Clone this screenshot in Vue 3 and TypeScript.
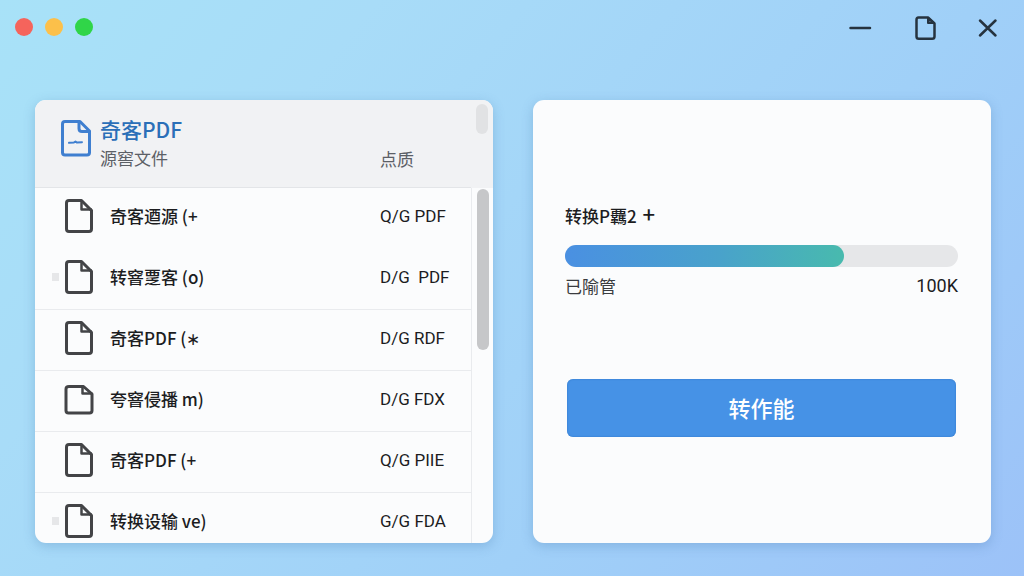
<script setup lang="ts">
interface FileRow {
  name: string
  format: string
  ruled: boolean
  marked: boolean
  compact: boolean
}

const files: FileRow[] = [
  { name: '奇客逎源 (+', format: 'Q/G PDF', ruled: false, marked: false, compact: false },
  { name: '转窨覂客 (o)', format: 'D/G  PDF', ruled: true, marked: true, compact: false },
  { name: '奇客PDF (∗', format: 'D/G RDF', ruled: true, marked: false, compact: false },
  { name: '夸窨侵播 m)', format: 'D/G FDX', ruled: true, marked: false, compact: true },
  { name: '奇客PDF (+', format: 'Q/G PIIE', ruled: true, marked: false, compact: false },
  { name: '转换设输 ve)', format: 'G/G FDA', ruled: false, marked: true, compact: false },
]

const progress = 71
</script>

<template>
  <div class="window">
    <header class="titlebar">
      <div class="lights">
        <button class="light red" type="button" aria-label="关闭"></button>
        <button class="light yellow" type="button" aria-label="最小化"></button>
        <button class="light green" type="button" aria-label="缩放"></button>
      </div>
      <div class="controls">
        <button type="button" aria-label="最小化">
          <svg width="24" height="28" viewBox="0 0 24 28"><path d="M2.5 15H22" /></svg>
        </button>
        <button type="button" aria-label="文件">
          <svg width="24" height="28" viewBox="0 0 24 28">
            <path d="M6.5 4.5H16L22.5 10.5V23.5Q22.5 25.8 20.2 25.8H6.8Q4.5 25.8 4.5 23.5V6.8Q4.5 4.5 6.5 4.5Z" />
            <path class="fold" d="M16 5V10H22Z" />
          </svg>
        </button>
        <button type="button" aria-label="关闭">
          <svg width="24" height="28" viewBox="0 0 24 28"><path d="M4 7.5L19.5 22.5M19.5 7.5L4 22.5" /></svg>
        </button>
      </div>
    </header>

    <main class="panels">
      <section class="card files">
        <table>
          <thead>
            <tr>
              <th scope="col">
                <div class="brand">
                  <svg class="brand-icon" width="32" height="40" viewBox="0 0 32 40">
                    <path d="M5 3.5H20L29.5 13V34.5Q29.5 37 27 37H5Q2.5 37 2.5 34.5V6Q2.5 3.5 5 3.5Z" />
                    <path d="M19 4V10.5Q19 13.5 22 13.5H29" />
                    <path class="dash" d="M9 24.8L14 24.4L15.5 23.6L17 24.6L22 24.2" />
                  </svg>
                  <div>
                    <h1>奇客PDF</h1>
                    <p>源窖文件</p>
                  </div>
                </div>
              </th>
              <th class="kind" scope="col">点质</th>
            </tr>
          </thead>
          <tbody>
            <tr v-for="(file, i) in files" :key="i" :class="{ ruled: file.ruled }">
              <td>
                <div class="file">
                  <span class="mark" :class="{ on: file.marked }"></span>
                  <svg v-if="file.compact" width="30" height="36" viewBox="0 0 30 36">
                    <path d="M5 5.5H19.5L28 13V29.5Q28 32 25.5 32H4.5Q2 32 2 29.5V8Q2 5.5 5 5.5Z" />
                    <path class="corner" d="M18.5 5.5V12.5H27.5" />
                  </svg>
                  <svg v-else width="30" height="36" viewBox="0 0 30 36">
                    <path d="M5 2.5H17.5L27.5 12.5V31Q27.5 33.5 25 33.5H5Q2.5 33.5 2.5 31V5Q2.5 2.5 5 2.5Z" />
                    <path class="corner" d="M17.5 3V11.5H27" />
                  </svg>
                  <span class="name">{{ file.name }}</span>
                </div>
              </td>
              <td class="format">{{ file.format }}</td>
            </tr>
          </tbody>
        </table>
        <div class="gutter" aria-hidden="true">
          <div class="gutter-head"><span class="thumb short"></span></div>
          <div class="gutter-body"><span class="thumb"></span></div>
        </div>
      </section>

      <section class="card convert">
        <h2 id="task">转换P覊2 <span class="plus">+</span></h2>
        <div class="track" role="progressbar" aria-labelledby="task" :aria-valuenow="progress">
          <div class="fill" :style="{ width: progress + '%' }"></div>
        </div>
        <div class="status"><span>已隃管</span><span class="total">100K</span></div>
        <button class="start" type="button">转作能</button>
      </section>
    </main>
  </div>
</template>

<style>
body {
  margin: 0;
}
</style>

<style scoped>
.window {
  box-sizing: border-box;
  height: 100vh;
  display: flex;
  flex-direction: column;
  overflow: hidden;
  color: #1c1d1f;
  font-family: "Noto Sans CJK SC", sans-serif;
  font-size: 17px;
  background: linear-gradient(130deg, #a8e2f8 0%, #a8dcf8 25%, #a0d0f8 65%, #9cc2f8 100%);
}

button {
  padding: 0;
  border: 0;
  background: none;
  cursor: pointer;
}

.titlebar {
  flex: none;
  height: 54px;
  padding: 0 24px 0 15px;
  display: flex;
  align-items: center;
  justify-content: space-between;
}

.lights {
  display: flex;
  gap: 12px;
}

.light {
  width: 18px;
  height: 18px;
  border-radius: 50%;
}

.red { background: #f5645c; }
.yellow { background: #fcc04a; }
.green { background: #30d548; }

.controls {
  display: flex;
  gap: 40px;
}

svg {
  display: block;
  flex: none;
  fill: none;
  stroke: #434447;
  stroke-width: 3;
  stroke-linecap: round;
  stroke-linejoin: round;
}

.controls svg {
  stroke: #26333f;
  stroke-width: 2.5;
}

.controls .fold {
  fill: #4b5f70;
  stroke-width: 2;
}

.panels {
  flex: 1;
  min-height: 0;
  padding: 46px 33px 33px 35px;
  display: grid;
  grid-template-columns: 1fr 1fr;
  grid-template-rows: minmax(0, 1fr);
  gap: 40px;
}

.card {
  overflow: hidden;
  border-radius: 11px;
  background: #fbfcfd;
  box-shadow: 0 3px 12px rgba(60, 110, 165, 0.28);
}

.files {
  display: grid;
  grid-template-columns: 1fr 22px;
  grid-template-rows: minmax(0, 1fr);
}

table {
  width: 100%;
  align-self: start;
  border-collapse: separate;
  border-spacing: 0;
  table-layout: fixed;
}

th {
  box-sizing: border-box;
  height: 88px;
  padding: 0 0 2px;
  border-bottom: 1px solid #e3e5e8;
  background: #f1f2f4;
  text-align: left;
  font-weight: 400;
}

.brand {
  display: flex;
  align-items: center;
  gap: 8px;
  padding-left: 25px;
}

.brand-icon {
  margin-bottom: 10px;
  stroke: #3f7fd0;
}

.brand .dash {
  stroke-width: 2;
}

h1,
h2,
p {
  margin: 0;
}

h1 {
  color: #2a6fb8;
  font-size: 21px;
  line-height: 30px;
  font-weight: 500;
}

p,
.kind {
  color: #5c6066;
  line-height: 28px;
}

.kind {
  width: 91px;
  padding-bottom: 14px;
  vertical-align: bottom;
}

td {
  box-sizing: border-box;
  height: 61px;
  padding: 0 0 4px;
  border-bottom: 1px solid transparent;
}

.ruled td {
  border-color: #e9ebee;
}

.file {
  display: flex;
  align-items: center;
}

.file svg {
  margin: 0 16px 0 5px;
}

.file .corner {
  stroke-width: 2.5;
}

.mark {
  width: 7px;
  height: 8px;
  margin-left: 17px;
}

.mark.on {
  background: #e6e7e9;
}

.name {
  padding-bottom: 2px;
  font-weight: 500;
}

.name,
.format {
  white-space: pre;
}

.format {
  font-family: Roboto, "Noto Sans CJK SC", sans-serif;
}

.gutter {
  display: flex;
  flex-direction: column;
}

.gutter-head {
  box-sizing: border-box;
  height: 88px;
  padding: 4px 5px;
  background: #f1f2f4;
}

.gutter-body {
  flex: 1;
  padding: 1px 5px;
  border-left: 1px solid #e9ebee;
}

.thumb {
  display: block;
  width: 12px;
  height: 161px;
  border-radius: 6px;
  background: #c6c7c9;
}

.thumb.short {
  height: 30px;
  background: #e1e2e4;
}

.convert {
  padding: 101px 33px 0 32px;
}

h2 {
  font-size: 17px;
  line-height: 30px;
  font-weight: 500;
}

.plus {
  margin-left: 2px;
  font-size: 22px;
  line-height: 22px;
}

.track {
  height: 22px;
  margin-top: 14px;
  border-radius: 11px;
  background: #e6e7e9;
}

.fill {
  height: 100%;
  border-radius: 11px;
  background: linear-gradient(90deg, #4a90e2, #49a2cb 55%, #48baae);
}

.status {
  display: flex;
  justify-content: space-between;
  line-height: 38px;
  color: #3a3c40;
}

.total {
  color: #1c1d1f;
  font-family: Roboto, "Noto Sans CJK SC", sans-serif;
  font-size: 18px;
}

.start {
  display: block;
  width: calc(100% - 4px);
  height: 58px;
  margin: 74px auto 0;
  padding-bottom: 2px;
  border-radius: 6px;
  background: #4692e6;
  box-shadow: inset 0 0 2px #2f74c4;
  color: #fff;
  font-family: inherit;
  font-size: 22px;
  font-weight: 500;
}
</style>
